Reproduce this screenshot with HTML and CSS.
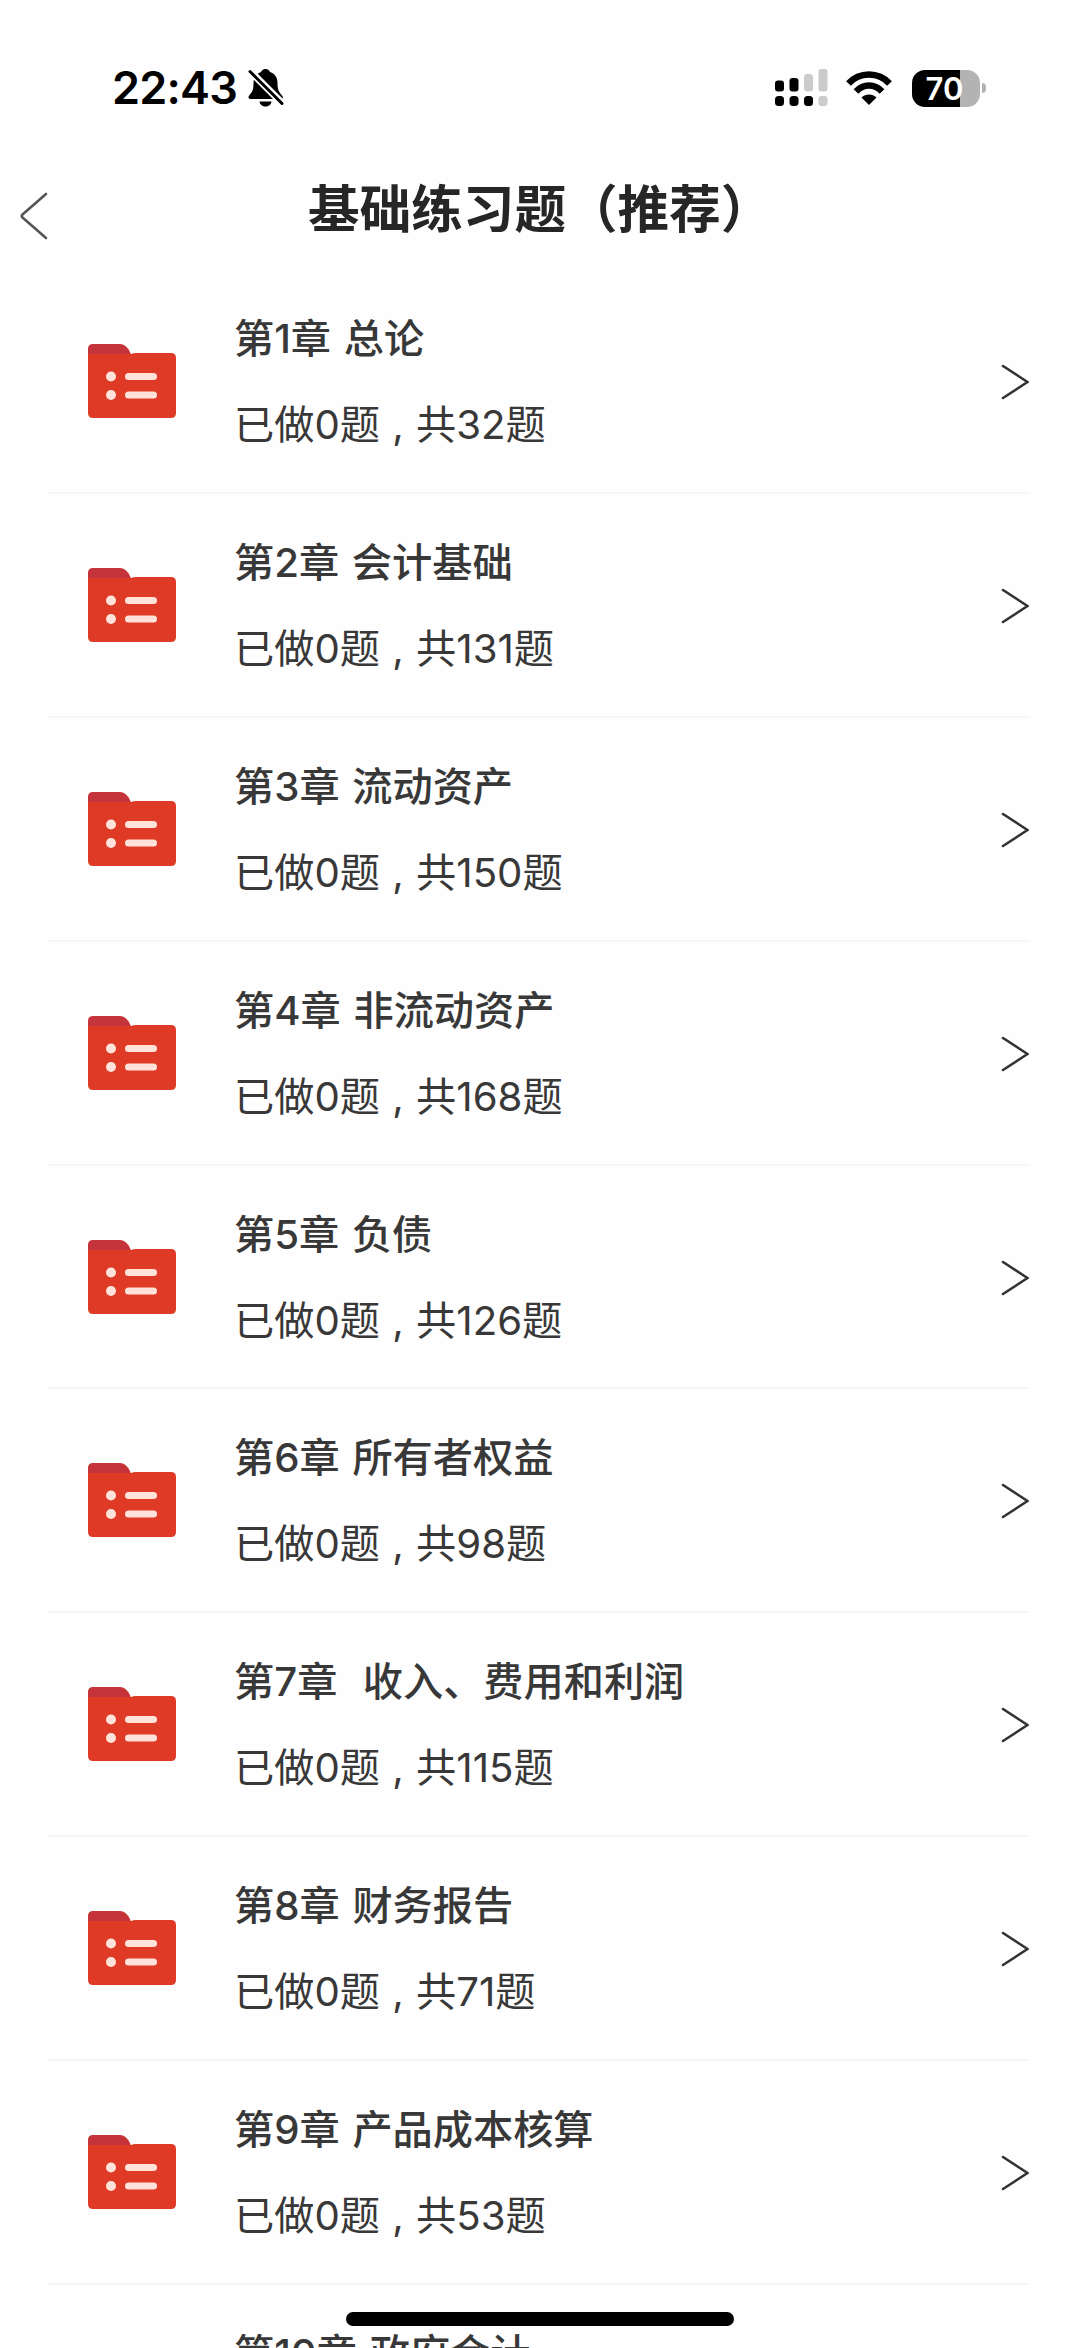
FILE: index.html
```html
<!DOCTYPE html>
<html lang="zh-CN">
<head>
    <meta charset="UTF-8">
    <meta name="viewport" content="width=device-width, initial-scale=1.0">
    <title>基础练习题（推荐）</title>
    <link rel="stylesheet" href="styles.css">
</head>
<body>
    <svg class="symbols" width="0" height="0">
        <symbol id="folder" viewBox="0 0 88 74">
            <path fill="#c5343b" d="M0 20V5Q0 0 5 0H32Q38 0 42 8L46 20Z"/>
            <path fill="#df3a26" d="M0 10H43Q45 9 48 9H83Q88 9 88 14V69Q88 74 83 74H5Q0 74 0 69Z"/>
            <g fill="#ffe3da">
                <circle cx="23" cy="32.500" r="5"/>
                <circle cx="23" cy="51" r="5"/>
                <rect x="37" y="29" width="32" height="7" rx="3.500"/>
                <rect x="37" y="47.500" width="32" height="7" rx="3.500"/>
            </g>
        </symbol>
        <symbol id="arrow" viewBox="0 0 28 36">
            <path fill="none" stroke="#333" stroke-width="2.600" stroke-linecap="round" d="M2 2L26.500 18L2 34"/>
        </symbol>
    </svg>
    <div class="status">
        <span class="time">22:43</span>
        <svg class="bell" width="36" height="40" viewBox="0 0 36 40">
            <path d="M17.500 1C20 1 21.500 2.500 22 4C27.500 6 29.500 10 29.500 15C29.500 22 31 24 34 27.500C35.500 29.500 35 31 33 31H3C0 31 0 28.500 1.500 27C4.500 23.500 5.500 22 5.500 15C5.500 10 8 6 13 4C13.500 2.500 15 1 17.500 1Z"/>
            <path d="M11.500 33.500H23.500C23 37 20.500 38.500 17.500 38.500C14.500 38.500 12 37 11.500 33.500Z"/>
            <path stroke="#fff" stroke-width="7" d="M0 1L37 38"/>
            <path stroke="#000" stroke-width="3" stroke-linecap="round" d="M2 3.500L34 35.500"/>
        </svg>
        <svg class="signal" width="53" height="38" viewBox="0 0 53 38">
            <rect x="0" y="11.500" width="9" height="11" rx="3"/>
            <rect x="14.500" y="9" width="9" height="13.500" rx="3"/>
            <g fill="#cbcbcb">
                <rect x="29" y="5" width="9" height="17.500" rx="3"/>
                <rect x="43.500" y="0" width="9" height="22.500" rx="3"/>
                <rect x="43.500" y="27" width="9" height="10" rx="3"/>
            </g>
            <rect x="0" y="27" width="9" height="10" rx="3.500"/>
            <rect x="14.500" y="27" width="9" height="10" rx="3.500"/>
            <rect x="29" y="27" width="9" height="10" rx="3.500"/>
        </svg>
        <svg class="wifi" width="46" height="34" viewBox="0 0 46 34">
            <g fill="none" stroke="#000" stroke-width="6.500">
                <path d="M2.500 12.500C13.500 0.500 32.500 0.500 43.500 12.500"/>
                <path d="M10 20.500C17.500 12.500 28.500 12.500 36 20.500"/>
            </g>
            <path d="M23 34L15.500 26.500C19.500 22.500 26.500 22.500 30.500 26.500Z"/>
        </svg>
        <div class="battery">70</div>
        <div class="battery-cap"></div>
    </div>
    <div class="header">
        <svg class="back" width="28" height="48" viewBox="0 0 28 48">
            <path fill="none" stroke="#555" stroke-width="2.600" stroke-linecap="round" stroke-linejoin="round" d="M26 2L2.500 22.500Q1 24 2.500 25.500L26 46"/>
        </svg>
        <h1>基础练习题（推荐）</h1>
    </div>
    <ul class="list">
        <li>
            <svg class="folder"><use href="#folder"/></svg>
            <div class="info">
                <h2>第1章 总论</h2>
                <p>已做0题 , 共32题</p>
            </div>
            <svg class="arrow"><use href="#arrow"/></svg>
        </li>
        <li>
            <svg class="folder"><use href="#folder"/></svg>
            <div class="info">
                <h2>第2章 会计基础</h2>
                <p>已做0题 , 共131题</p>
            </div>
            <svg class="arrow"><use href="#arrow"/></svg>
        </li>
        <li>
            <svg class="folder"><use href="#folder"/></svg>
            <div class="info">
                <h2>第3章 流动资产</h2>
                <p>已做0题 , 共150题</p>
            </div>
            <svg class="arrow"><use href="#arrow"/></svg>
        </li>
        <li>
            <svg class="folder"><use href="#folder"/></svg>
            <div class="info">
                <h2>第4章 非流动资产</h2>
                <p>已做0题 , 共168题</p>
            </div>
            <svg class="arrow"><use href="#arrow"/></svg>
        </li>
        <li>
            <svg class="folder"><use href="#folder"/></svg>
            <div class="info">
                <h2>第5章 负债</h2>
                <p>已做0题 , 共126题</p>
            </div>
            <svg class="arrow"><use href="#arrow"/></svg>
        </li>
        <li>
            <svg class="folder"><use href="#folder"/></svg>
            <div class="info">
                <h2>第6章 所有者权益</h2>
                <p>已做0题 , 共98题</p>
            </div>
            <svg class="arrow"><use href="#arrow"/></svg>
        </li>
        <li>
            <svg class="folder"><use href="#folder"/></svg>
            <div class="info">
                <h2>第7章  收入、费用和利润</h2>
                <p>已做0题 , 共115题</p>
            </div>
            <svg class="arrow"><use href="#arrow"/></svg>
        </li>
        <li>
            <svg class="folder"><use href="#folder"/></svg>
            <div class="info">
                <h2>第8章 财务报告</h2>
                <p>已做0题 , 共71题</p>
            </div>
            <svg class="arrow"><use href="#arrow"/></svg>
        </li>
        <li>
            <svg class="folder"><use href="#folder"/></svg>
            <div class="info">
                <h2>第9章 产品成本核算</h2>
                <p>已做0题 , 共53题</p>
            </div>
            <svg class="arrow"><use href="#arrow"/></svg>
        </li>
        <li class="last">
            <div class="info">
                <h2>第10章 政府会计</h2>
            </div>
        </li>
    </ul>
    <div class="home-bar"></div>
</body>
</html>
```
FILE: styles.css
```css
* {
    box-sizing: border-box;
    margin: 0;
    padding: 0;
}
html {
    overflow: hidden;
}
body {
    position: relative;
    height: 2348px;
    overflow: hidden;
    background: #fefefe;
    color: #383838;
    font-family: Inter, "Noto Sans CJK SC", sans-serif;
}
svg {
    display: block;
    flex: none;
}
.symbols {
    display: none;
}
.status {
    display: flex;
    align-items: center;
    height: 176px;
    padding-left: 112px;
    color: #000;
}
.time {
    width: 136px;
    font-size: 45px;
    font-weight: 600;
    letter-spacing: -0.8px;
    line-height: 60px;
    white-space: nowrap;
}
.signal {
    margin-left: 491px;
}
.wifi {
    margin-left: 18px;
}
.battery {
    width: 68px;
    height: 37px;
    margin-left: 20px;
    padding-right: 3px;
    border-radius: 13px;
    background: linear-gradient(to right, #000 48px, #b3b3b3 48px);
    color: #fff;
    font-size: 31px;
    font-weight: 600;
    line-height: 37px;
    text-align: center;
}
.battery-cap {
    width: 4px;
    height: 10px;
    margin-left: 2px;
    border-radius: 0 4px 4px 0;
    background: #b3b3b3;
}
.header {
    display: flex;
    height: 94px;
    padding-left: 20px;
}
.back {
    margin-top: 16px;
}
.header h1 {
    margin-left: 260px;
    color: #262626;
    font-size: 51.6px;
    font-weight: 700;
    line-height: 66px;
}
.list {
    margin: 0 50px 0 48px;
    list-style: none;
}
.list li {
    display: flex;
    height: 223.9px;
    padding-left: 40px;
    border-bottom: 2px solid #f7f7f7;
}
.list li.last {
    height: 78px;
    padding-left: 128px;
    overflow: hidden;
    border-bottom: 0;
}
.folder {
    width: 88px;
    height: 74px;
    margin-top: 74px;
}
.info {
    flex: 1;
    margin: 39px 0 0 58px;
}
.info h2 {
    font-size: 40.2px;
    font-weight: 500;
    line-height: 60px;
    white-space: pre;
    word-spacing: 2px;
}
.info p {
    margin-top: 26px;
    font-size: 40.2px;
    line-height: 60px;
    word-spacing: 1px;
}
.arrow {
    width: 28px;
    height: 36px;
    margin: 94px 1.5px 0 0;
}
.home-bar {
    position: absolute;
    left: 346px;
    bottom: 22px;
    width: 388px;
    height: 14px;
    border-radius: 7px;
    background: #000;
}
```
